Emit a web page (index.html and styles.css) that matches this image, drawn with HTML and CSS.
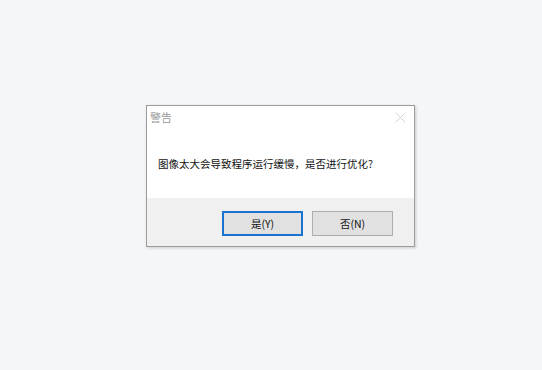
FILE: index.html
```html
<!DOCTYPE html>
<html lang="zh">
<head>
<meta charset="utf-8">
<link rel="stylesheet" href="styles.css">
</head>
<body>
<div class="dialog">
  <div class="top">
    <div class="titlebar">
      <span class="title">警告</span>
      <svg class="close" width="11" height="11" viewBox="0 0 11 11"><path d="M0.5 0.5L10.5 10.5M10.5 0.5L0.5 10.5" stroke="#d4d4d4" stroke-width="1" fill="none"/></svg>
    </div>
    <div class="message">图像太大会导致程序运行缓慢，是否进行优化?</div>
  </div>
  <div class="footer">
    <button class="btn default">是(Y)</button>
    <button class="btn">否(N)</button>
  </div>
</div>
</body>
</html>
```
FILE: styles.css
```css
html, body {
  margin: 0;
  padding: 0;
}
body {
  background: #f5f6f8;
  width: 542px;
  height: 370px;
  font-family: "Noto Sans CJK SC", "Noto Sans", sans-serif;
  overflow: hidden;
}
.dialog {
  margin: 105px 0 0 146px;
  width: 267px;
  border: 1px solid #9d9d9d;
  background: #fff;
  box-shadow: 1px 1px 3px rgba(0,0,0,0.18);
}
.top {
  height: 92px;
  background: #fff;
}
.titlebar {
  height: 22px;
  display: flex;
  justify-content: space-between;
  align-items: center;
  padding: 0 8px 0 3px;
}
.title {
  font-size: 11px;
  color: #9a9a9a;
  line-height: 22px;
}
.close {
  margin-top: 1px;
}
.message {
  margin-top: 28px;
  padding-left: 11px;
  font-size: 10.5px;
  line-height: 16px;
  color: #111;
  white-space: nowrap;
}
.footer {
  height: 48px;
  background: #f0f0f0;
  display: flex;
  align-items: flex-start;
  padding: 13px 0 0 75px;
  box-sizing: border-box;
  gap: 9px;
}
.btn {
  width: 81px;
  height: 25px;
  margin: 0;
  padding: 0;
  background: #e1e1e1;
  border: 1px solid #adadad;
  font-family: "Noto Sans CJK SC", "Noto Sans", sans-serif;
  font-size: 10.5px;
  color: #111;
}
.btn.default {
  border: 2px solid #1a73cf;
}
```
